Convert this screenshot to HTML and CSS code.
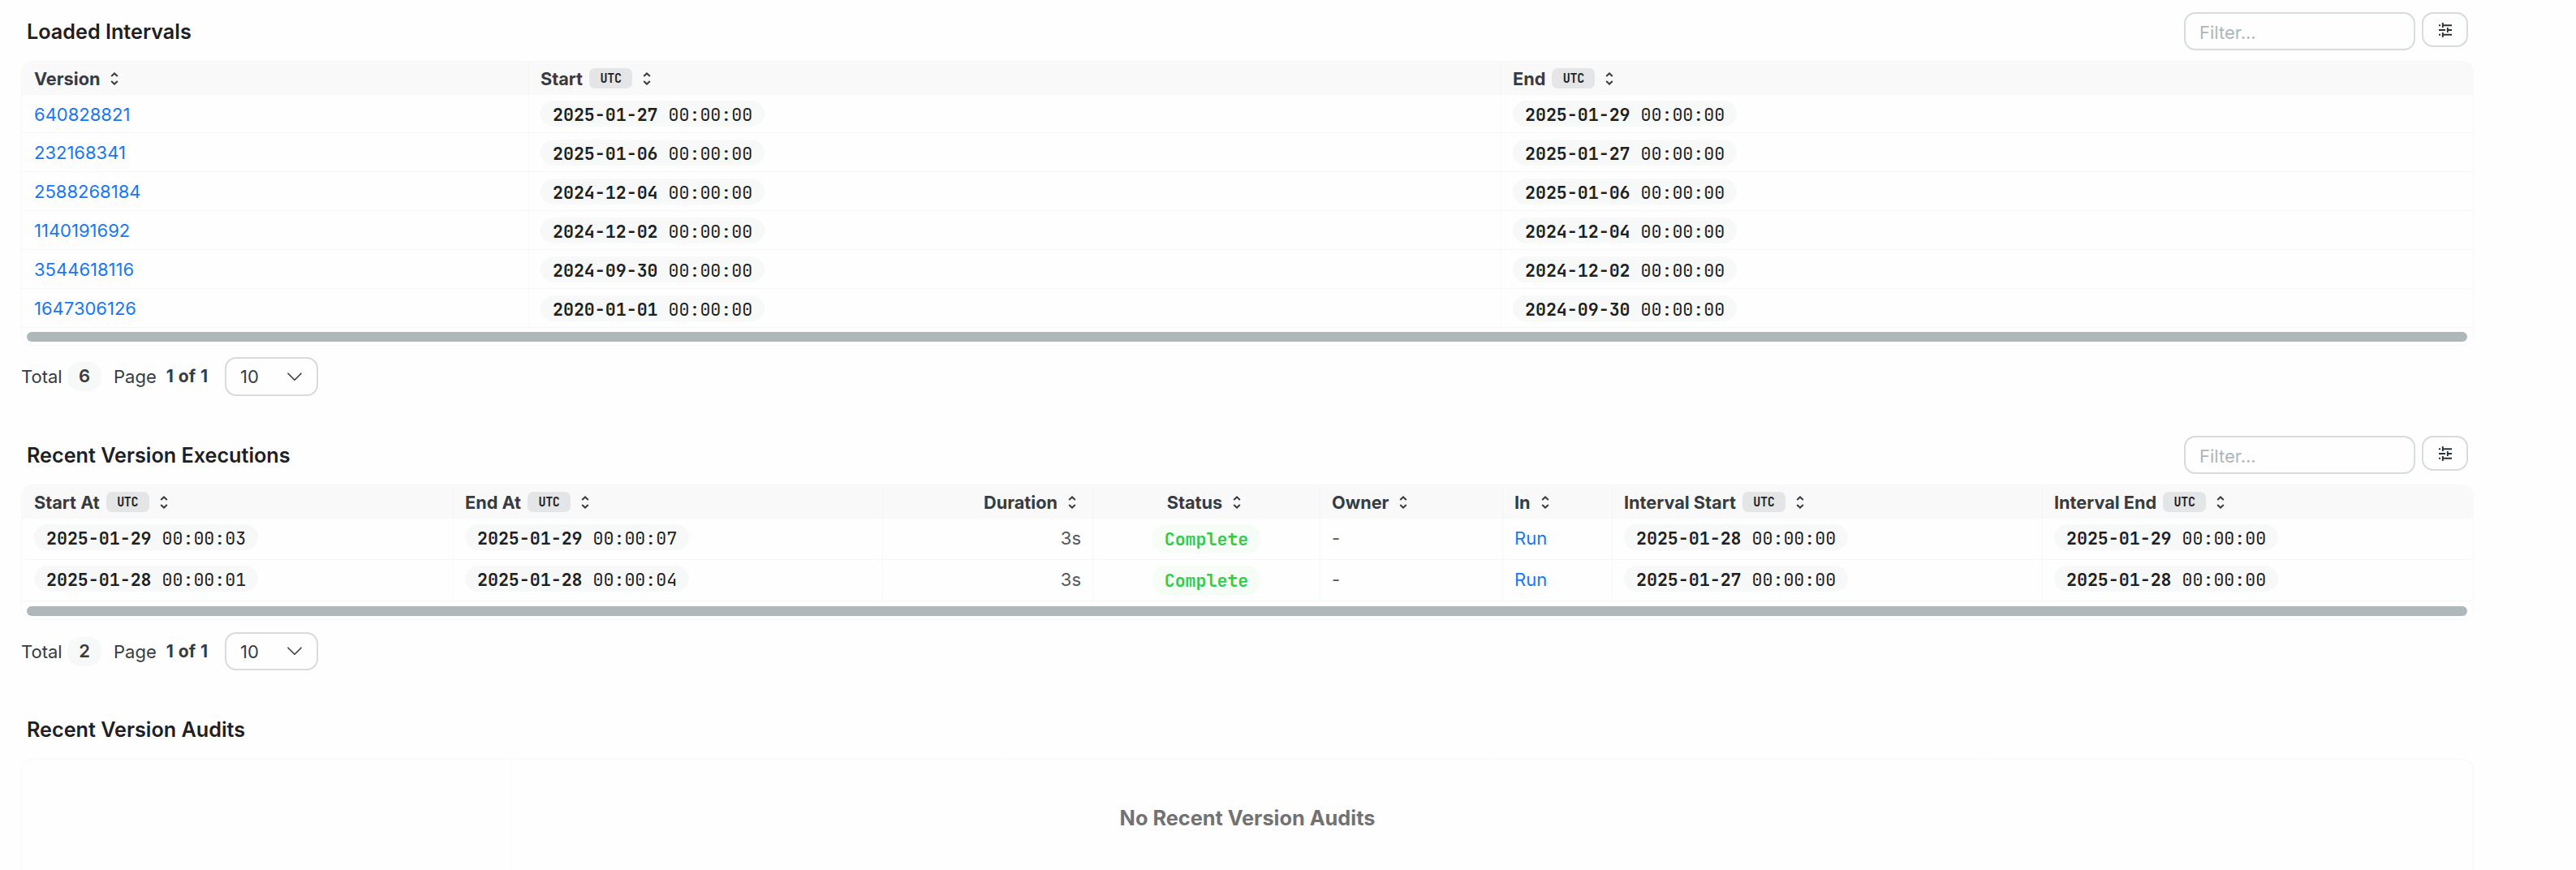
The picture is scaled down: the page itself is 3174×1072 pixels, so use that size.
FILE: index.html
```html
<!DOCTYPE html>
<html lang="en">
<head>
<meta charset="utf-8">
<title>Model versions</title>
<link rel="stylesheet" href="styles.css">
</head>
<body>
<svg class="sprite" aria-hidden="true">
  <symbol id="sort" viewBox="0 0 10 16"><path d="M1.2 5 5 1.4 8.8 5M1.2 11 5 14.6 8.8 11" fill="none" stroke="currentColor" stroke-width="2"/></symbol>
  <symbol id="sliders" viewBox="0 0 16 18"><path d="M0 3.2h2M4.8 3.2H16M4.8 0v6M0 9h8M10.8 9H16M10.8 6v6M0 14.8h2M4.8 14.8H16M4.8 12v6" fill="none" stroke="currentColor" stroke-width="1.9"/></symbol>
  <symbol id="chevron" viewBox="0 0 18 11"><path d="M1 1.2l8 8 8-8" fill="none" stroke="currentColor" stroke-width="1.6" stroke-linecap="round" stroke-linejoin="round"/></symbol>
</svg>
<main class="page">
  <section class="panel panel-intervals">
    <header class="bar"><h2>Loaded Intervals</h2>
      <div class="tools"><input class="filter" placeholder="Filter..."><button class="options"><svg><use href="#sliders"/></svg></button></div></header>
    <div class="frame">
      <div class="grid intervals head">
        <div><b>Version</b><svg class="sort"><use href="#sort"/></svg></div>
        <div><b>Start</b><span class="utc">UTC</span><svg class="sort"><use href="#sort"/></svg></div>
        <div><b>End</b><span class="utc">UTC</span><svg class="sort"><use href="#sort"/></svg></div>
      </div>
      <div class="grid intervals row"><div><a>640828821</a></div><div><span class="time"><b>2025-01-27</b> 00:00:00</span></div><div><span class="time"><b>2025-01-29</b> 00:00:00</span></div></div>
      <div class="grid intervals row"><div><a>232168341</a></div><div><span class="time"><b>2025-01-06</b> 00:00:00</span></div><div><span class="time"><b>2025-01-27</b> 00:00:00</span></div></div>
      <div class="grid intervals row"><div><a>2588268184</a></div><div><span class="time"><b>2024-12-04</b> 00:00:00</span></div><div><span class="time"><b>2025-01-06</b> 00:00:00</span></div></div>
      <div class="grid intervals row"><div><a>1140191692</a></div><div><span class="time"><b>2024-12-02</b> 00:00:00</span></div><div><span class="time"><b>2024-12-04</b> 00:00:00</span></div></div>
      <div class="grid intervals row"><div><a>3544618116</a></div><div><span class="time"><b>2024-09-30</b> 00:00:00</span></div><div><span class="time"><b>2024-12-02</b> 00:00:00</span></div></div>
      <div class="grid intervals row"><div><a>1647306126</a></div><div><span class="time"><b>2020-01-01</b> 00:00:00</span></div><div><span class="time"><b>2024-09-30</b> 00:00:00</span></div></div>
      <div class="scroll"></div>
    </div>
    <footer class="pager"><span class="total">Total</span><span class="count">6</span><span class="label">Page</span><b>1 of 1</b><div class="select"><span>10</span><svg><use href="#chevron"/></svg></div></footer>
  </section>

  <section class="panel panel-executions">
    <header class="bar"><h2>Recent Version Executions</h2>
      <div class="tools"><input class="filter" placeholder="Filter..."><button class="options"><svg><use href="#sliders"/></svg></button></div></header>
    <div class="frame">
      <div class="grid executions head">
        <div><b>Start At</b><span class="utc">UTC</span><svg class="sort"><use href="#sort"/></svg></div>
        <div><b>End At</b><span class="utc">UTC</span><svg class="sort"><use href="#sort"/></svg></div>
        <div class="end"><b>Duration</b><svg class="sort"><use href="#sort"/></svg></div>
        <div class="mid"><b>Status</b><svg class="sort"><use href="#sort"/></svg></div>
        <div><b>Owner</b><svg class="sort"><use href="#sort"/></svg></div>
        <div><b>In</b><svg class="sort"><use href="#sort"/></svg></div>
        <div><b>Interval Start</b><span class="utc">UTC</span><svg class="sort"><use href="#sort"/></svg></div>
        <div><b>Interval End</b><span class="utc">UTC</span><svg class="sort"><use href="#sort"/></svg></div>
      </div>
      <div class="grid executions row"><div><span class="time"><b>2025-01-29</b> 00:00:03</span></div><div><span class="time"><b>2025-01-29</b> 00:00:07</span></div><div class="end"><span>3s</span></div><div class="mid"><span class="status">Complete</span></div><div><span>-</span></div><div><a>Run</a></div><div><span class="time"><b>2025-01-28</b> 00:00:00</span></div><div><span class="time"><b>2025-01-29</b> 00:00:00</span></div></div>
      <div class="grid executions row"><div><span class="time"><b>2025-01-28</b> 00:00:01</span></div><div><span class="time"><b>2025-01-28</b> 00:00:04</span></div><div class="end"><span>3s</span></div><div class="mid"><span class="status">Complete</span></div><div><span>-</span></div><div><a>Run</a></div><div><span class="time"><b>2025-01-27</b> 00:00:00</span></div><div><span class="time"><b>2025-01-28</b> 00:00:00</span></div></div>
      <div class="scroll"></div>
    </div>
    <footer class="pager"><span class="total">Total</span><span class="count">2</span><span class="label">Page</span><b>1 of 1</b><div class="select"><span>10</span><svg><use href="#chevron"/></svg></div></footer>
  </section>

  <section class="panel">
    <header class="bar"><h2>Recent Version Audits</h2></header>
    <div class="frame empty"><p>No Recent Version Audits</p></div>
  </section>
</main>
</body>
</html>
```
FILE: styles.css
```css
* { box-sizing: border-box; }
body { margin: 0; background: #fefefe; color: #363c42; font: 22px/30px Inter, sans-serif; font-optical-sizing: none; overflow: hidden; }
.sprite { display: none; }
.page { height: 1072px; width: 3048px; padding-left: 26px; overflow: hidden; }
.panel-intervals { height: 522px; }
.panel-executions { height: 338px; }

.bar { height: 75px; display: flex; justify-content: space-between; padding: 15px 7px 0; }
h2 { margin: 9px 0 0; font-size: 25.2px; line-height: 30px; font-weight: 600; color: #1e2022; }
.tools { display: flex; align-items: flex-start; gap: 8px; }
.filter { width: 285px; height: 47px; border: 2px solid #d5dcdb; border-radius: 14px; padding: 2px 17px 0; background: #fefefe; font: 22px Inter, sans-serif; }
.filter::placeholder { color: #adb6b9; opacity: 1; }
.options { width: 57px; height: 43px; padding: 0; border: 2px solid #d5dcdb; border-radius: 14px; background: #fefefe; color: #2c3137; display: flex; align-items: center; justify-content: center; }
.options svg { width: 16px; height: 18px; }

.frame { border: 1px solid #f7f8f8; border-radius: 14px; overflow: hidden; }
.grid { display: grid; }
.intervals { grid-template-columns: 625px 1198px 1fr; }
.executions { grid-template-columns: 532px 529px 259px 280px 225px 135px 530px 1fr; }
.grid > div { display: flex; align-items: center; padding: 0 14px; border-right: 1px solid #f7f8f8; }
.grid > div:first-child { padding-left: 15px; }
.grid > div:last-child { border-right: 0; }
.grid > .end { justify-content: flex-end; }
.grid > .mid { justify-content: center; }
.head { height: 41px; background: #f9f9f9; }
.head > div { border-color: #f3f4f4; }
.head b { font-weight: 700; font-size: 21.7px; }
.row { border-bottom: 1px solid #f5f6f6; color: #53595c; }
.row a, .row span:not([class]) { padding-top: 1px; }
.intervals.row { height: 48px; }
.intervals.row:nth-child(2) { height: 47px; }
.executions.row { height: 51px; }
.executions.row > div { padding-bottom: 4px; }
a { color: #1877f2; }

.utc { margin-left: 8px; width: 53px; height: 25px; border-radius: 7px; background: #e4e5e7; color: #1e2022; font: bold 15px/27px "JetBrains Mono", "DejaVu Sans Mono", monospace; text-align: center; letter-spacing: -0.3px; }
.sort { width: 10px; height: 16px; margin: 0 6px 0 13px; }
.time, .status { font-family: "JetBrains Mono", "DejaVu Sans Mono", monospace; font-size: 21.6px; white-space: pre; }
.time { height: 32px; line-height: 34px; padding: 0 15px; border-radius: 16px; background: #f7f9f8; color: #1e2022; }
.status { height: 36px; line-height: 36px; margin-bottom: -4px; padding: 0 15px; border-radius: 16px; background: #f5fdf6; color: #32cb4b; font-weight: 600; }
.scroll { height: 12px; margin: 5px 7px 4px 6px; border-radius: 6px; background: #aeb7ba; }
.panel-executions .scroll { margin-top: 6px; }

.pager { display: flex; align-items: center; width: 366px; height: 48px; margin-top: 14px; }
.panel-executions .pager { height: 47px; margin-top: 15px; }
.pager b { margin-left: 12px; font-size: 21px; word-spacing: 1px; }
.total { width: 57px; }
.count { width: 42px; height: 36px; border-radius: 16px; background: #f7f9f9; font-weight: 600; line-height: 35px; text-align: center; }
.label { margin-left: 15px; }
.select { display: flex; align-items: center; justify-content: space-between; width: 115px; height: 100%; margin-left: auto; padding: 0 18px 0 17px; border: 2px solid #d5dcdb; border-radius: 14px; }
.select svg { width: 18px; height: 11px; }

.empty { height: 220px; display: flex; justify-content: center; background: repeating-linear-gradient(90deg, transparent 0 603px, #fbfbfb 603px 604px); }
.empty p { margin: 57px 0 0; font-size: 25.3px; font-weight: 700; color: #727272; }
```
